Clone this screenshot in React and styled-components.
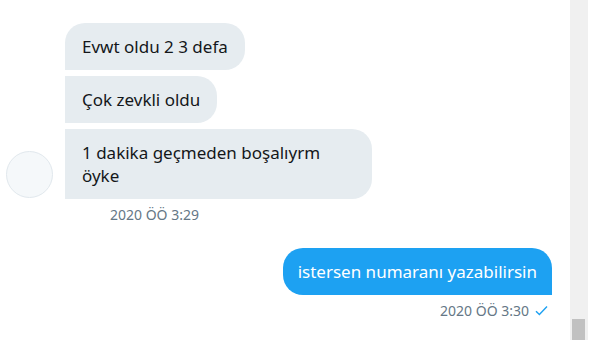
import React from "react";
import styled, { createGlobalStyle } from "styled-components";

const GlobalStyle = createGlobalStyle`
  html, body {
    margin: 0;
    padding: 0;
    background: #ffffff;
  }
  body {
    font-family: "Noto Sans", "Open Sans", sans-serif;
  }
`;

const Page = styled.div`
  display: flex;
  width: 606px;
  height: 340px;
  overflow: hidden;
  background: #ffffff;
`;

const Chat = styled.div`
  width: 570px;
  display: flex;
  flex-direction: column;
  padding-top: 23px;
  box-sizing: border-box;
`;

const Group = styled.div`
  display: flex;
  align-items: flex-end;
  gap: 12px;
  padding-left: 6px;
`;

const Avatar = styled.div`
  width: 47px;
  height: 47px;
  flex-shrink: 0;
  border-radius: 50%;
  background: #f5f8fa;
  border: 1px solid #e1e8ed;
  box-sizing: border-box;
  margin-bottom: 1px;
`;

const Stack = styled.div`
  display: flex;
  flex-direction: column;
  align-items: flex-start;
  gap: 6px;
`;

const Bubble = styled.div`
  box-sizing: border-box;
  font-size: 17px;
  line-height: 23px;
  padding: 12px ${({ $mine }) => ($mine ? 15 : 17)}px;
  color: ${({ $mine }) => ($mine ? "#ffffff" : "#14171a")};
  background: ${({ $mine }) => ($mine ? "#1da1f2" : "#e6ecf0")};
  border-radius: ${({ $corners }) => $corners};
  max-width: 307px;
  white-space: ${({ $mine }) => ($mine ? "nowrap" : "normal")};
`;

const Meta = styled.div`
  display: flex;
  align-items: center;
  gap: 6px;
  font-size: 14px;
  color: #657786;
  margin-top: ${({ $top }) => $top}px;
  padding-left: ${({ $left }) => $left || 0}px;
  padding-right: ${({ $right }) => $right || 0}px;
`;

const Mine = styled.div`
  display: flex;
  flex-direction: column;
  align-items: flex-end;
  padding-right: 18px;
  margin-top: 24px;
`;

const Track = styled.div`
  width: 18px;
  height: 340px;
  background: #f0f0f0;
  display: flex;
  flex-direction: column;
  justify-content: flex-end;
  align-items: flex-start;
`;

const Thumb = styled.div`
  width: 13px;
  height: 21px;
  margin-left: 2px;
  background: #c1c1c1;
`;

const Check = () => (
  <svg width="13" height="11" viewBox="0 0 13 11" fill="none">
    <path d="M1 6.2 L4.4 9.6 L12 1.4" stroke="#1da1f2" strokeWidth="1.4" />
  </svg>
);

const R = 20;

export default function App() {
  return (
    <Page>
      <GlobalStyle />
      <Chat>
        <Group>
          <Avatar />
          <Stack>
            <Bubble $corners={`${R}px ${R}px ${R}px 0`}>Evwt oldu 2 3 defa</Bubble>
            <Bubble $corners={`0 ${R}px ${R}px 0`}>Çok zevkli oldu</Bubble>
            <Bubble $corners={`0 ${R}px ${R}px 0`}>1 dakika geçmeden boşalıyrm öyke</Bubble>
          </Stack>
        </Group>
        <Meta $top={6} $left={110}>2020 ÖÖ 3:29</Meta>
        <Mine>
          <Bubble $mine $corners={`${R}px ${R}px 0 ${R}px`}>
            istersen numaranı yazabilirsin
          </Bubble>
          <Meta $top={6} $right={4}>
            2020 ÖÖ 3:30 <Check />
          </Meta>
        </Mine>
      </Chat>
      <Track>
        <Thumb />
      </Track>
    </Page>
  );
}
